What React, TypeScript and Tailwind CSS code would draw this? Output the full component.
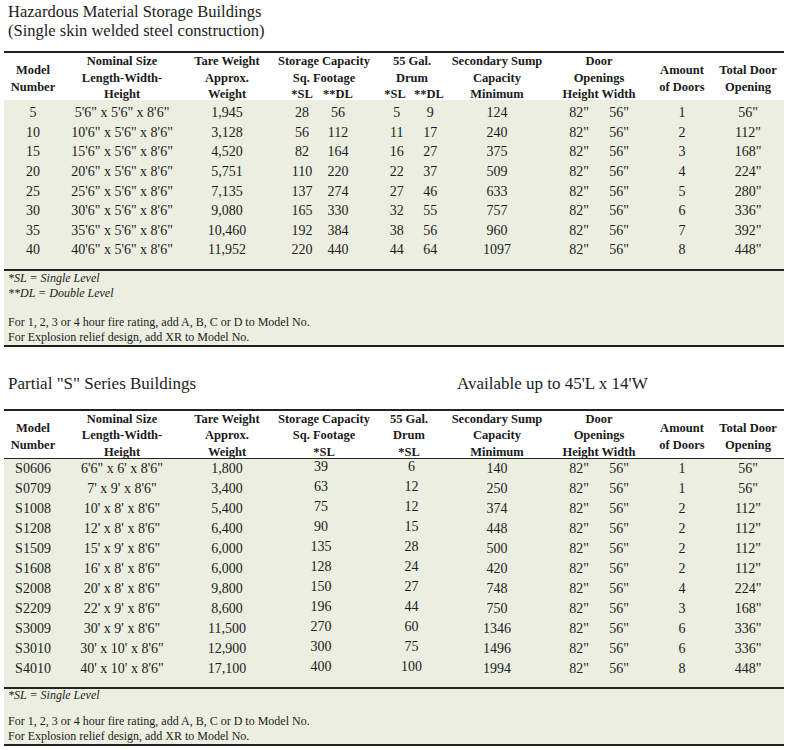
const cols = "grid grid-cols-[58px_120px_90px_104px_72px_98px_106px_60px_72px]";

type FullRow = [string, string, string, string, string, string, string, string, string, string];
type PartialRow = [string, string, string, string, string, string, string, string];

const fullRows: FullRow[] = [
  ["5", `5'6" x 5'6" x 8'6"`, "1,945", "28", "56", "5", "9", "124", "1", `56"`],
  ["10", `10'6" x 5'6" x 8'6"`, "3,128", "56", "112", "11", "17", "240", "2", `112"`],
  ["15", `15'6" x 5'6" x 8'6"`, "4,520", "82", "164", "16", "27", "375", "3", `168"`],
  ["20", `20'6" x 5'6" x 8'6"`, "5,751", "110", "220", "22", "37", "509", "4", `224"`],
  ["25", `25'6" x 5'6" x 8'6"`, "7,135", "137", "274", "27", "46", "633", "5", `280"`],
  ["30", `30'6" x 5'6" x 8'6"`, "9,080", "165", "330", "32", "55", "757", "6", `336"`],
  ["35", `35'6" x 5'6" x 8'6"`, "10,460", "192", "384", "38", "56", "960", "7", `392"`],
  ["40", `40'6" x 5'6" x 8'6"`, "11,952", "220", "440", "44", "64", "1097", "8", `448"`],
];

const partialRows: PartialRow[] = [
  ["S0606", `6'6" x 6' x 8'6"`, "1,800", "39", "6", "140", "1", `56"`],
  ["S0709", `7' x 9' x 8'6"`, "3,400", "63", "12", "250", "1", `56"`],
  ["S1008", `10' x 8' x 8'6"`, "5,400", "75", "12", "374", "2", `112"`],
  ["S1208", `12' x 8' x 8'6"`, "6,400", "90", "15", "448", "2", `112"`],
  ["S1509", `15' x 9' x 8'6"`, "6,000", "135", "28", "500", "2", `112"`],
  ["S1608", `16' x 8' x 8'6"`, "6,000", "128", "24", "420", "2", `112"`],
  ["S2008", `20' x 8' x 8'6"`, "9,800", "150", "27", "748", "4", `224"`],
  ["S2209", `22' x 9' x 8'6"`, "8,600", "196", "44", "750", "3", `168"`],
  ["S3009", `30' x 9' x 8'6"`, "11,500", "270", "60", "1346", "6", `336"`],
  ["S3010", `30' x 10' x 8'6"`, "12,900", "300", "75", "1496", "6", `336"`],
  ["S4010", `40' x 10' x 8'6"`, "17,100", "400", "100", "1994", "8", `448"`],
];

function Header({ double }: { double: boolean }) {
  return (
    <div className={`${cols} h-[47px] items-center text-center font-bold text-[12.5px] leading-[16.5px] text-[#1a1a1a]`}>
      <div className="pt-[2px]">Model<br />Number</div>
      <div>Nominal Size<br />Length-Width-<br />Height</div>
      <div>Tare Weight<br />Approx.<br />Weight</div>
      <div>
        Storage Capacity<br />Sq. Footage
        {double ? (
          <div className="flex pl-[12px]">
            <span className="w-[36px]">*SL</span>
            <span className="w-[36px]">**DL</span>
          </div>
        ) : (
          <div>*SL</div>
        )}
      </div>
      <div className={double ? "" : "pr-[6px]"}>
        55 Gal.<br />Drum
        {double ? (
          <div className="flex pl-[3px]">
            <span className="w-[32px]">*SL</span>
            <span className="w-[36px]">**DL</span>
          </div>
        ) : (
          <div>*SL</div>
        )}
      </div>
      <div>Secondary Sump<br />Capacity<br />Minimum</div>
      <div>Door<br />Openings<br />Height Width</div>
      <div className="pt-[2px]">Amount<br />of Doors</div>
      <div className="pt-[2px]">Total Door<br />Opening</div>
    </div>
  );
}

function Door() {
  return (
    <div className="flex pl-[13px]">
      <span className="w-[40px]">82"</span>
      <span className="w-[40px]">56"</span>
    </div>
  );
}

function Notes({ double }: { double: boolean }) {
  return (
    <div className="border-t-2 border-[#222] pl-[4px] text-[12px] text-[#1c1c1c]">
      <div className={`italic ${double ? "leading-[15px]" : "leading-[12px]"}`}>*SL = Single Level</div>
      {double && <div className="italic leading-[15px]">**DL = Double Level</div>}
      <div className={double ? "mt-[14px] leading-[15px]" : "mt-[13px] leading-[15px]"}>
        For 1, 2, 3 or 4 hour fire rating, add A, B, C or D to Model No.
      </div>
      <div className="leading-[15px]">For Explosion relief design, add XR to Model No.</div>
    </div>
  );
}

export default function App() {
  return (
    <div className="w-[789px] h-[750px] bg-white font-['Liberation_Serif',serif] text-[#1c1c1c] overflow-hidden">
      <div className="pt-[2px] pl-[8px] text-[16.5px] leading-[19px]">
        <div>Hazardous Material Storage Buildings</div>
        <div>(Single skin welded steel construction)</div>
      </div>

      <div className="ml-[4px] w-[780px] mt-[11px] border-t-2 border-[#222]">
        <Header double />
        <div className="bg-[#ebeee0]">
          <div className="pt-[3px] pb-[9px] text-[14px]">
            {fullRows.map((r) => (
              <div key={r[0]} className={`${cols} h-[19.6px] items-center text-center leading-[19px]`}>
                <div>{r[0]}</div>
                <div>{r[1]}</div>
                <div>{r[2]}</div>
                <div className="flex pl-[12px]">
                  <span className="w-[36px]">{r[3]}</span>
                  <span className="w-[36px]">{r[4]}</span>
                </div>
                <div className="flex pl-[5px]">
                  <span className="w-[32px]">{r[5]}</span>
                  <span className="w-[36px]">{r[6]}</span>
                </div>
                <div>{r[7]}</div>
                <Door />
                <div>{r[8]}</div>
                <div>{r[9]}</div>
              </div>
            ))}
          </div>
          <Notes double />
        </div>
        <div className="border-t-2 border-[#222]" />
      </div>

      <div className="mt-[27px] flex items-center text-[17px] leading-[20px]">
        <div className="w-[457px] pl-[8px]">Partial "S" Series Buildings</div>
        <div>Available up to 45'L x 14'W</div>
      </div>

      <div className="ml-[4px] w-[780px] mt-[15px] border-t-2 border-[#222]">
        <Header double={false} />
        <div className="bg-[#ebeee0] border-t border-[#222]">
          <div className="pt-0 pb-[8px] text-[14px]">
            {partialRows.map((r) => (
              <div key={r[0]} className={`${cols} h-[20px] items-center text-center leading-[19px]`}>
                <div>{r[0]}</div>
                <div>{r[1]}</div>
                <div>{r[2]}</div>
                <div className="pr-[6px] -translate-y-[2px]">{r[3]}</div>
                <div className="pr-[1px] -translate-y-[2px]">{r[4]}</div>
                <div>{r[5]}</div>
                <Door />
                <div>{r[6]}</div>
                <div>{r[7]}</div>
              </div>
            ))}
          </div>
          <Notes double={false} />
        </div>
        <div className="border-t-2 border-[#222]" />
      </div>
    </div>
  );
}
